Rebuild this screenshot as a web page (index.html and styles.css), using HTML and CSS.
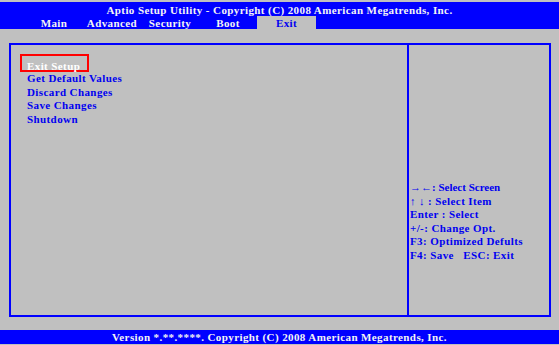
FILE: index.html
```html
<!DOCTYPE html>
<html lang="en">
<head>
  <meta charset="UTF-8">
  <title>Aptio Setup Utility - Exit</title>
  <link rel="stylesheet" href="styles.css">
</head>
<body>
  <div class="header">
    <div class="title">Aptio Setup Utility - Copyright (C) 2008 American Megatrends, Inc.</div>
    <div class="tabs">
      <span class="tab">Main</span>
      <span class="tab">Advanced</span>
      <span class="tab">Security</span>
      <span class="tab">Boot</span>
      <span class="tab active">Exit</span>
    </div>
  </div>

  <div class="main">
    <div class="frame">
      <div class="menu">
        <div class="item selected">Exit Setup</div>
        <div class="item">Get Default Values</div>
        <div class="item">Discard Changes</div>
        <div class="item">Save Changes</div>
        <div class="item">Shutdown</div>
      </div>
      <div class="help">
        <div class="help-list">
          <div class="help-line">→←: Select Screen</div>
          <div class="help-line">↑ ↓ : Select Item</div>
          <div class="help-line">Enter : Select</div>
          <div class="help-line">+/-: Change Opt.</div>
          <div class="help-line">F3: Optimized Defults</div>
          <div class="help-line">F4: Save   ESC: Exit</div>
        </div>
      </div>
    </div>
  </div>

  <div class="footer">Version *.**.****. Copyright (C) 2008 American Megatrends, Inc.</div>
</body>
</html>
```

FILE: styles.css
```css
body {
  margin: 0;
  width: 559px;
  height: 345px;
  background-color: #c0c0c0; /* BIOS gray */
  font-family: "Liberation Serif", "DejaVu Serif", serif;
  font-size: 11px;
  font-weight: bold;
  letter-spacing: 0.4px;
  color: #0000f0;
  overflow: hidden;
}
.header {
  margin-top: 2px;
  background-color: #0000ff;
  color: #f4f4f4;
}
.title {
  text-align: center;
  padding-top: 2px;
  line-height: 12px;
}
.tabs {
  display: flex;
  padding-left: 25px;
  height: 13px;
}
.tab {
  width: 58px;
  text-align: center;
  padding-top: 1px;
  line-height: 12px;
}
.tab.active {
  width: 59px;
  background-color: #c0c0c0;
  color: #0000f0;
}
.main {
  padding: 14px 8px 13px 9px;
}
.frame {
  display: flex;
  height: 274px;
  box-sizing: border-box;
  border: 2px solid #0000ff;
}
.menu {
  width: 398px;
  padding: 9px 0 0 9px;
  box-sizing: border-box;
  border-right: 2px solid #0000ff;
}
.item {
  padding-left: 7px;
  line-height: 13.5px;
}
.item.selected {
  width: 69px;
  height: 18px;
  box-sizing: border-box;
  padding: 4px 0 0 5px;
  line-height: 12px;
  border: 2px solid #ff0000;
  color: #ffffff;
}
.help {
  flex: 1;
  padding-left: 1px;
}
.help-list {
  margin-top: 136px;
}
.help-line {
  height: 13.6px;
  line-height: 13.6px;
  white-space: pre;
}
.help-line:first-child {
  letter-spacing: 0;
}
.footer {
  background-color: #0000ff;
  color: #f4f4f4;
  text-align: center;
  line-height: 14px;
  height: 14px;
}
```
